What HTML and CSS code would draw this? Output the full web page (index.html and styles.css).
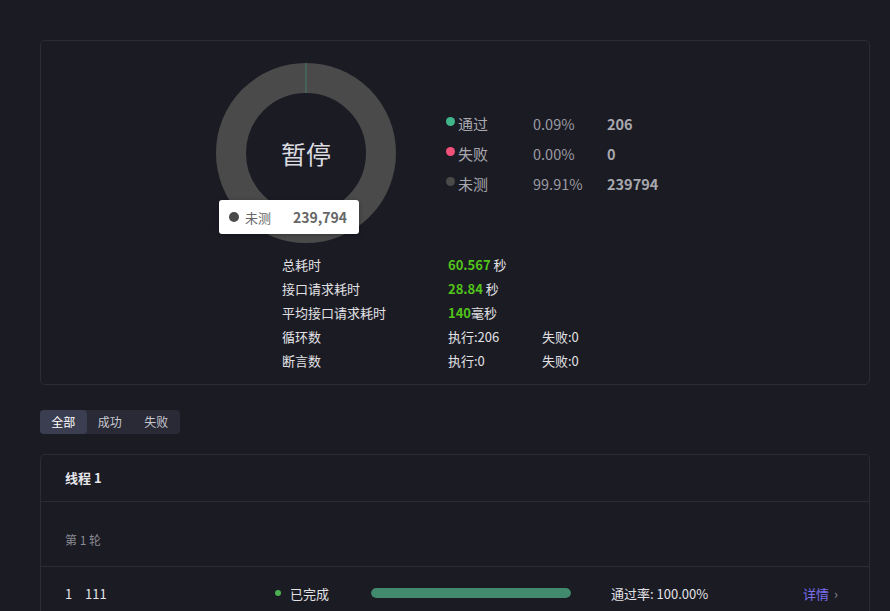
FILE: index.html
```html
<!DOCTYPE html>
<html lang="zh">
<head>
<meta charset="utf-8">
<link rel="stylesheet" href="styles.css">
</head>
<body>
<div class="page">
  <section class="card summary">
    <div class="chart-row">
      <div class="donut">
        <svg width="180" height="180" viewBox="0 0 180 180">
          <circle cx="90" cy="90" r="75" fill="none" stroke="#4a4a4a" stroke-width="30"/>
          <line x1="90" y1="0" x2="90" y2="30" stroke="#3f7d64" stroke-width="1"/>
        </svg>
        <div class="donut-title">暂停</div>
        <div class="tooltip"><span class="tip-dot"></span><span class="tip-name">未测</span><span class="tip-val">239,794</span></div>
      </div>
      <div class="legend">
        <div class="legend-row"><span class="dot pass"></span><span class="l-name">通过</span><span class="l-pct">0.09%</span><span class="l-num">206</span></div>
        <div class="legend-row"><span class="dot fail"></span><span class="l-name">失败</span><span class="l-pct">0.00%</span><span class="l-num">0</span></div>
        <div class="legend-row"><span class="dot none"></span><span class="l-name">未测</span><span class="l-pct">99.91%</span><span class="l-num">239794</span></div>
      </div>
    </div>
    <div class="stats">
      <div class="stat"><span class="s-label">总耗时</span><span class="s-val"><b>60.567</b> 秒</span></div>
      <div class="stat"><span class="s-label">接口请求耗时</span><span class="s-val"><b>28.84</b> 秒</span></div>
      <div class="stat"><span class="s-label">平均接口请求耗时</span><span class="s-val"><b>140</b>毫秒</span></div>
      <div class="stat"><span class="s-label">循环数</span><span class="s-val">执行:206</span><span class="s-extra">失败:0</span></div>
      <div class="stat"><span class="s-label">断言数</span><span class="s-val">执行:0</span><span class="s-extra">失败:0</span></div>
    </div>
  </section>

  <div class="tabs">
    <span class="tab active">全部</span>
    <span class="tab">成功</span>
    <span class="tab">失败</span>
  </div>

  <section class="card thread">
    <div class="thread-head">线程 1</div>
    <div class="round">第 1 轮</div>
    <div class="row">
      <span class="r-id">1</span>
      <span class="r-name">111</span>
      <span class="r-status"><span class="s-dot"></span>已完成</span>
      <span class="progress"><span class="bar" style="width:100%"></span></span>
      <span class="r-rate">通过率: 100.00%</span>
      <span class="r-detail">详情 <span class="chev">›</span></span>
    </div>
  </section>
</div>
</body>
</html>
```

FILE: styles.css
```css
* { box-sizing: border-box; }
html, body {
  margin: 0;
  padding: 0;
  background: #1b1b24;
  font-family: "Noto Sans CJK SC", "Noto Sans", sans-serif;
  color: #e2e2e6;
  overflow: hidden;
}
.page {
  padding: 40px 20px 0 40px;
}
.card {
  border: 1px solid #2b2c37;
  border-radius: 5px;
  background: #1b1b24;
}
.summary {
  padding: 22px 0 12px 175px;
}
.chart-row {
  display: flex;
  align-items: center;
}
.donut {
  position: relative;
  width: 180px;
  height: 180px;
  flex: none;
}
.donut svg { display: block; }
.donut-title {
  position: absolute;
  left: 0; right: 0; top: 72px;
  text-align: center;
  font-size: 25px;
  line-height: 36px;
  color: #dcdce0;
}
.tooltip {
  position: absolute;
  left: 3px;
  top: 137px;
  width: 140px;
  height: 34px;
  background: #fff;
  border-radius: 3px;
  display: flex;
  align-items: center;
  padding-left: 10px;
  font-size: 13px;
  color: #666;
  box-shadow: 0 1px 4px rgba(0,0,0,.3);
}
.tip-dot {
  width: 10px; height: 10px; border-radius: 50%;
  background: #4a4a4a;
  margin-right: 6px;
}
.tip-name { width: 48px; }
.tip-val { font-weight: 700; font-size: 14px; color: #666; }
.legend {
  margin-left: 50px;
  display: flex;
  flex-direction: column;
}
.legend-row {
  display: flex;
  align-items: center;
  height: 30px;
  font-size: 15px;
  color: #a8a8ae;
}
.dot {
  width: 9px; height: 9px; border-radius: 50%;
  margin-right: 3px;
  position: relative;
  top: -2px;
}
.dot.pass { background: #3fb68b; }
.dot.fail { background: #f0507a; }
.dot.none { background: #4a4a4a; }
.l-name { width: 75px; }
.l-pct { width: 74px; font-size: 14.5px; color: #9a9aa0; }
.l-num { font-weight: 700; font-size: 14.5px; color: #a8a8ae; }
.stats {
  margin-top: 9px;
  margin-left: 66px;
}
.stat {
  display: flex;
  height: 24px;
  align-items: center;
  font-size: 13px;
  color: #e2e2e6;
}
.s-label { width: 166px; }
.s-val { width: 94px; }
.s-val b { color: #52c41a; font-weight: 700; }
.tabs {
  display: inline-flex;
  margin-top: 25px;
  background: #292a36;
  border-radius: 4px;
  height: 24px;
}
.tab {
  width: 46.5px;
  text-align: center;
  font-size: 12px;
  line-height: 24px;
  color: #c8c8d0;
  border-radius: 4px;
}
.tab.active {
  background: #3b3d50;
  color: #ffffff;
}
.thread {
  margin-top: 20px;
  height: 200px;
}
.thread-head {
  height: 47px;
  padding-left: 24px;
  line-height: 45px;
  font-size: 13px;
  font-weight: 700;
  color: #e6e6ea;
  border-bottom: 1px solid #2b2c37;
}
.round {
  height: 65px;
  padding: 29px 0 0 24px;
  font-size: 12px;
  color: #8a8a92;
  border-bottom: 1px solid #2b2c37;
}
.row {
  display: flex;
  align-items: center;
  height: 52px;
  padding-left: 24px;
  font-size: 13px;
  color: #e2e2e6;
}
.r-id { width: 20px; }
.r-name { width: 190px; }
.r-status {
  width: 96px;
  display: flex;
  align-items: center;
}
.s-dot {
  width: 6px; height: 6px; border-radius: 50%;
  background: #4caf50;
  margin-right: 9px;
}
.progress {
  width: 200px;
  height: 10px;
  border-radius: 5px;
  background: #2b2c37;
  overflow: hidden;
  display: block;
}
.bar {
  display: block;
  height: 100%;
  background: #418a6e;
  border-radius: 5px;
}
.r-rate { margin-left: 40px; width: 192px; }
.r-detail { color: #7b6ff0; }
.chev { color: #8c8c96; margin-left: 2px; }
```
